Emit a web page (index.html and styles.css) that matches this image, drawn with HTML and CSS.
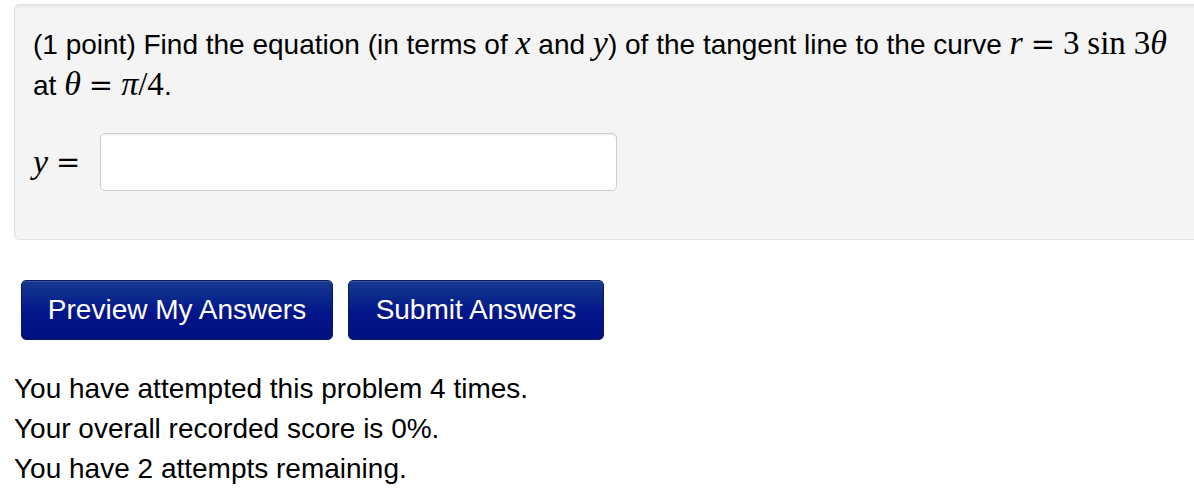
FILE: index.html
```html
<!DOCTYPE html>
<html>
<head>
<meta charset="utf-8">
<link rel="stylesheet" href="styles.css">
</head>
<body>
<div class="page">
  <div class="problem">
    <p class="question">(1 point) Find the equation (in terms of <span class="mi">x</span> and <span class="mi">y</span>) of the tangent line to the curve <span class="mi">r</span><span class="mo">=</span><span class="mn">3</span> <span class="mn">sin</span> <span class="mn">3</span><span class="mi">θ</span> at <span class="mi">θ</span><span class="mo">=</span><span class="mi">π</span><span class="mn">/4</span>.</p>
    <div class="answer-row">
      <span class="label"><span class="mi">y</span><span class="mo eq">=</span></span>
      <input class="answer" type="text">
    </div>
  </div>
  <div class="buttons">
    <button class="btn">Preview My Answers</button>
    <button class="btn">Submit Answers</button>
  </div>
  <div class="status">
    <div>You have attempted this problem 4 times.</div>
    <div>Your overall recorded score is 0%.</div>
    <div>You have 2 attempts remaining.</div>
  </div>
</div>
</body>
</html>
```

FILE: styles.css
```css
html, body {
  margin: 0;
  padding: 0;
  background: #fff;
  overflow: hidden;
}
body {
  font-family: "Liberation Sans", Arial, sans-serif;
  font-size: 28px;
  color: #000;
}
.page {
  padding: 4px 0 0 14px;
}
.problem {
  background: #f4f4f4;
  border: 1px solid #e3e3e3;
  border-right: none;
  border-radius: 5px 0 0 5px;
  box-shadow: inset 0 2px 2px rgba(0,0,0,0.05);
  padding: 19px 0 48px 18px;
  margin-right: -20px;
}
.question {
  margin: 0;
  line-height: 41px;
  padding-right: 40px;
}
.mi, .mn, .mo {
  line-height: 0;
}
.mi {
  font-family: "Liberation Serif", "Times New Roman", serif;
  font-style: italic;
  font-size: 34px;
}
.mn {
  font-family: "Liberation Serif", "Times New Roman", serif;
  font-size: 33px;
}
.mo {
  font-family: "DejaVu Serif", "Liberation Serif", serif;
  font-size: 29px;
  margin: 0 8px;
}
.answer-row {
  display: flex;
  align-items: center;
  margin-top: 27px;
}
.label {
  display: inline-flex;
  align-items: center;
  width: 67px;
  line-height: 40px;
}
.label .eq {
  margin: 0 0 0 8px;
}
.answer {
  width: 517px;
  height: 58px;
  box-sizing: border-box;
  border: 1px solid #cccccc;
  border-radius: 5px;
  background: #fff;
  box-shadow: inset 0 1px 1px rgba(0,0,0,0.075);
  font-size: 24px;
  padding: 0 10px;
}
.buttons {
  display: flex;
  gap: 15px;
  margin: 40px 0 0 7px;
}
.btn {
  font-family: "Liberation Sans", Arial, sans-serif;
  font-size: 28px;
  color: #fff;
  height: 60px;
  padding: 0;
  border: 1px solid #0b1a5c;
  border-radius: 5px;
  background: linear-gradient(#143a8e, #03158a 55%, #001080);
  box-shadow: inset 0 1px 0 rgba(255,255,255,0.15);
  cursor: pointer;
}
.btn:first-child {
  width: 312px;
}
.btn:last-child {
  width: 256px;
}
.status {
  margin-top: 29px;
  line-height: 40px;
}
```
